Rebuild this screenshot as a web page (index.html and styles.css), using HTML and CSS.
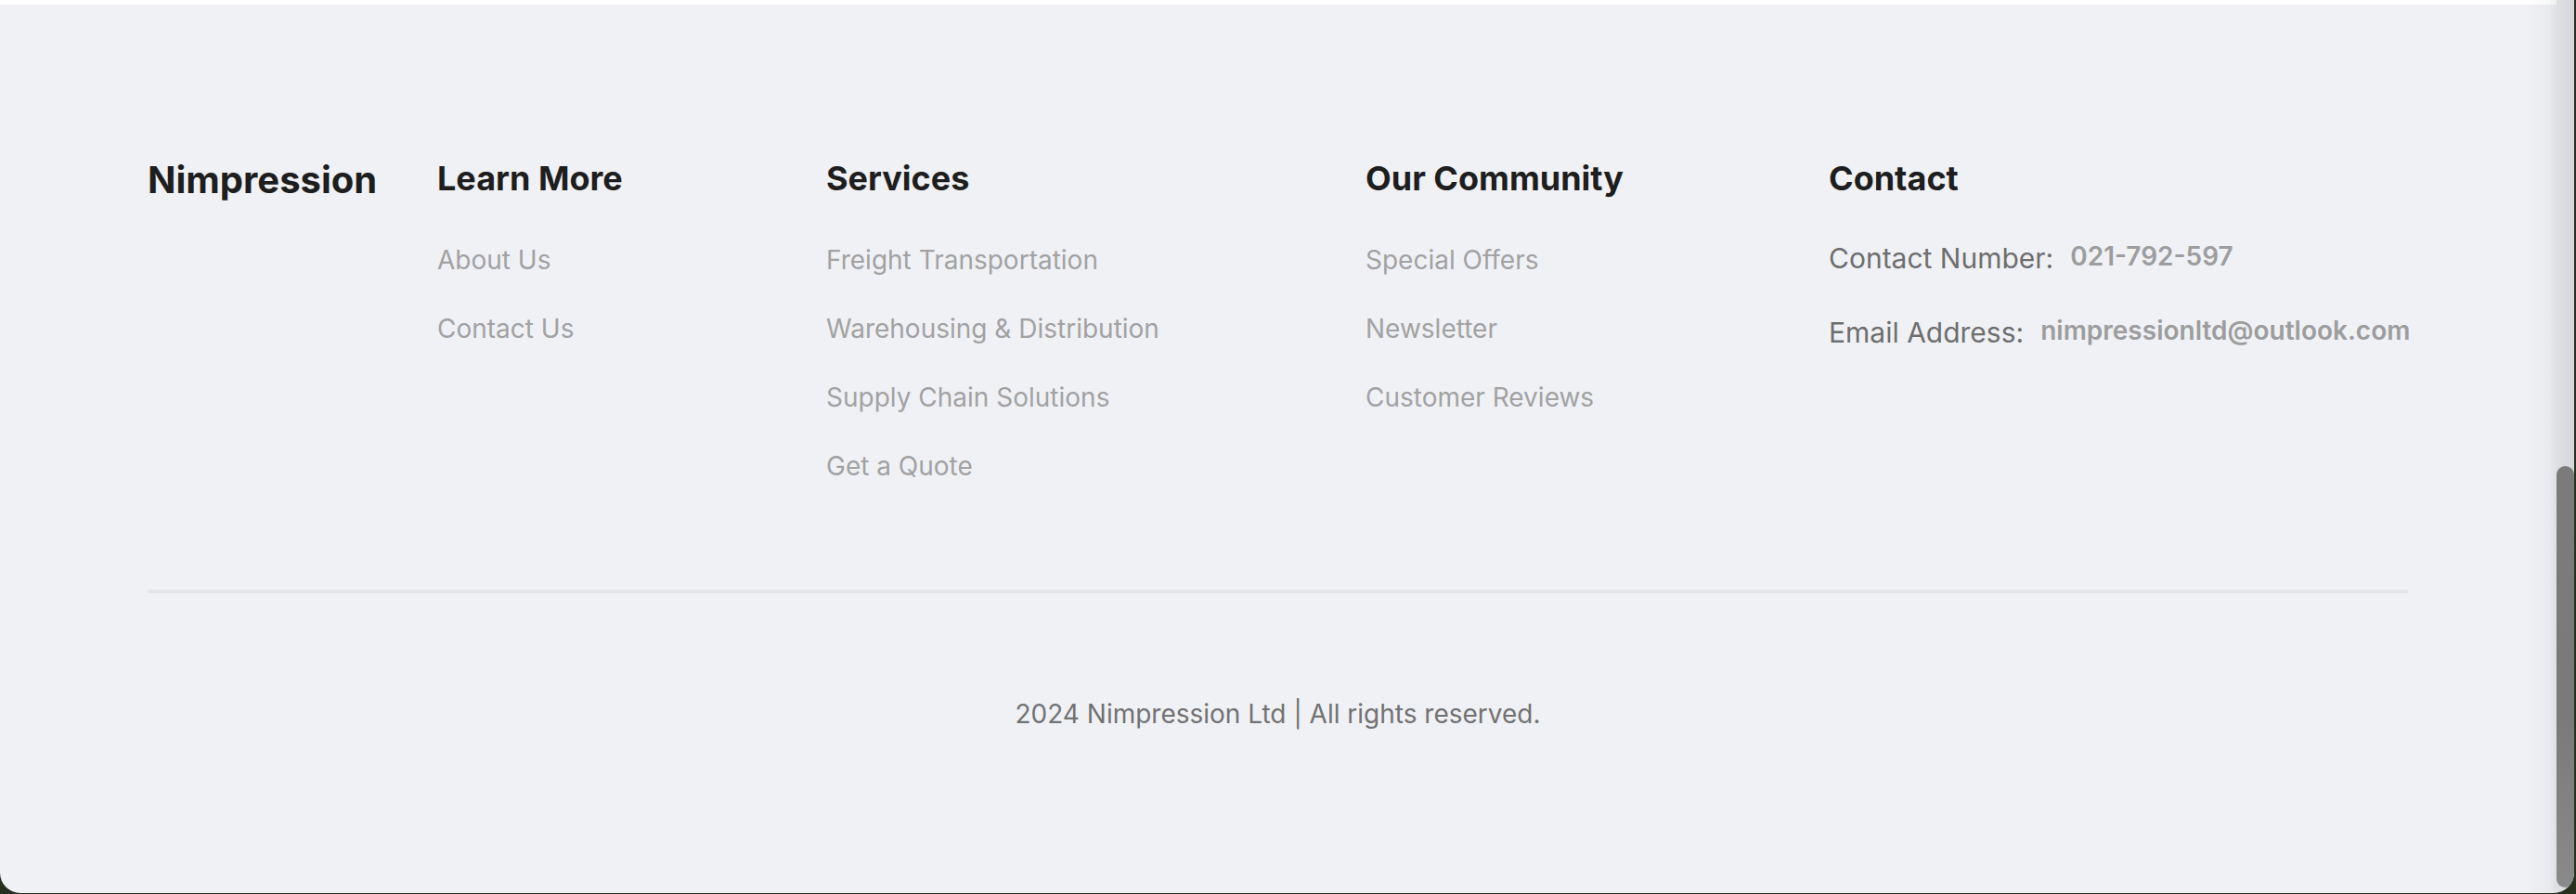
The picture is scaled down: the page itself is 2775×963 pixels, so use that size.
FILE: index.html
```html
<!DOCTYPE html>
<html lang="en">
<head>
<meta charset="utf-8">
<title>Nimpression Footer</title>
<link rel="stylesheet" href="styles.css">
</head>
<body>
<div class="window">
  <div class="prev-section"></div>
  <footer class="footer">
    <div class="container">
      <div class="columns">
        <div class="brand">Nimpression</div>
        <div class="col">
          <h3 class="col-title">Learn More</h3>
          <ul class="links">
            <li><a href="#">About Us</a></li>
            <li><a href="#">Contact Us</a></li>
          </ul>
        </div>
        <div class="col">
          <h3 class="col-title">Services</h3>
          <ul class="links">
            <li><a href="#">Freight Transportation</a></li>
            <li><a href="#">Warehousing &amp; Distribution</a></li>
            <li><a href="#">Supply Chain Solutions</a></li>
            <li><a href="#">Get a Quote</a></li>
          </ul>
        </div>
        <div class="col">
          <h3 class="col-title">Our Community</h3>
          <ul class="links">
            <li><a href="#">Special Offers</a></li>
            <li><a href="#">Newsletter</a></li>
            <li><a href="#">Customer Reviews</a></li>
          </ul>
        </div>
        <div class="col">
          <h3 class="col-title">Contact</h3>
          <ul class="contact-list">
            <li class="contact-row"><span class="contact-label">Contact Number:</span><span class="contact-value">021-792-597</span></li>
            <li class="contact-row"><span class="contact-label">Email Address:</span><span class="contact-value">nimpressionltd@outlook.com</span></li>
          </ul>
        </div>
      </div>
      <div class="divider"></div>
      <p class="copyright">2024 Nimpression Ltd | All rights reserved.</p>
    </div>
  </footer>
  <div class="scrollbar"><div class="scroll-thumb"></div></div>
</div>
</body>
</html>
```

FILE: styles.css
```css
* {
  box-sizing: border-box;
}

html, body {
  margin: 0;
  padding: 0;
}

body {
  background: #26301f;
  font-family: Inter, "Liberation Sans", sans-serif;
  width: 2775px;
  height: 963px;
  overflow: hidden;
}

.window {
  position: relative;
  width: 2773px;
  height: 962px;
  background: #f0f1f5;
  border-bottom-left-radius: 22px;
  border-bottom-right-radius: 22px;
  overflow: hidden;
}

.prev-section {
  width: 2754px;
  height: 5px;
  background: #ffffff;
}

.footer {
  padding-top: 166px;
}

.container {
  margin-left: 159px;
  width: 2435px;
}

.columns {
  display: grid;
  grid-template-columns: 312px 419px 581px 499px 1fr;
  align-items: start;
}

.brand {
  font-size: 40px;
  line-height: 46px;
  font-weight: 700;
  color: #1e1e1e;
}

.col-title {
  margin: 0;
  font-size: 36px;
  line-height: 42px;
  font-weight: 700;
  color: #1e1e1e;
}

.links {
  list-style: none;
  margin: 46px 0 0;
  padding: 0;
  display: flex;
  flex-direction: column;
  gap: 32px;
}

.links a {
  display: block;
  font-size: 28px;
  line-height: 42px;
  color: #a2a2a2;
  text-decoration: none;
}

.contact-list {
  list-style: none;
  margin: 44px 0 0;
  padding: 0;
  display: flex;
  flex-direction: column;
  gap: 38px;
}

.contact-row {
  display: flex;
  align-items: center;
  gap: 18px;
  line-height: 42px;
  white-space: nowrap;
}

.contact-label {
  flex-shrink: 0;
  font-size: 30px;
  color: #6e6e6e;
}

.contact-value {
  flex-shrink: 0;
  color: #9d9d9d;
  font-weight: 600;
  font-size: 28px;
  line-height: 38px;
  margin-top: -4px;
}

.divider {
  margin-top: 112px;
  height: 4px;
  background: #e5e6ea;
}

.copyright {
  margin: 109px 0 0;
  text-align: center;
  font-size: 28px;
  line-height: 42px;
  color: #727272;
}

.scrollbar {
  position: absolute;
  top: 0;
  right: 0;
  width: 54px;
  height: 100%;
  background: linear-gradient(to right, rgba(0,0,0,0) 0px, rgba(0,0,0,0.03) 28px, rgba(0,0,0,0.07) 34px, rgba(0,0,0,0.11) 54px);
}

.scroll-thumb {
  position: absolute;
  right: 0;
  top: 502px;
  width: 19px;
  height: 454px;
  border-radius: 10px;
  background: linear-gradient(to bottom, #7b7b7b, #7a7a7a 60%, #8a8a8a);
}
```
